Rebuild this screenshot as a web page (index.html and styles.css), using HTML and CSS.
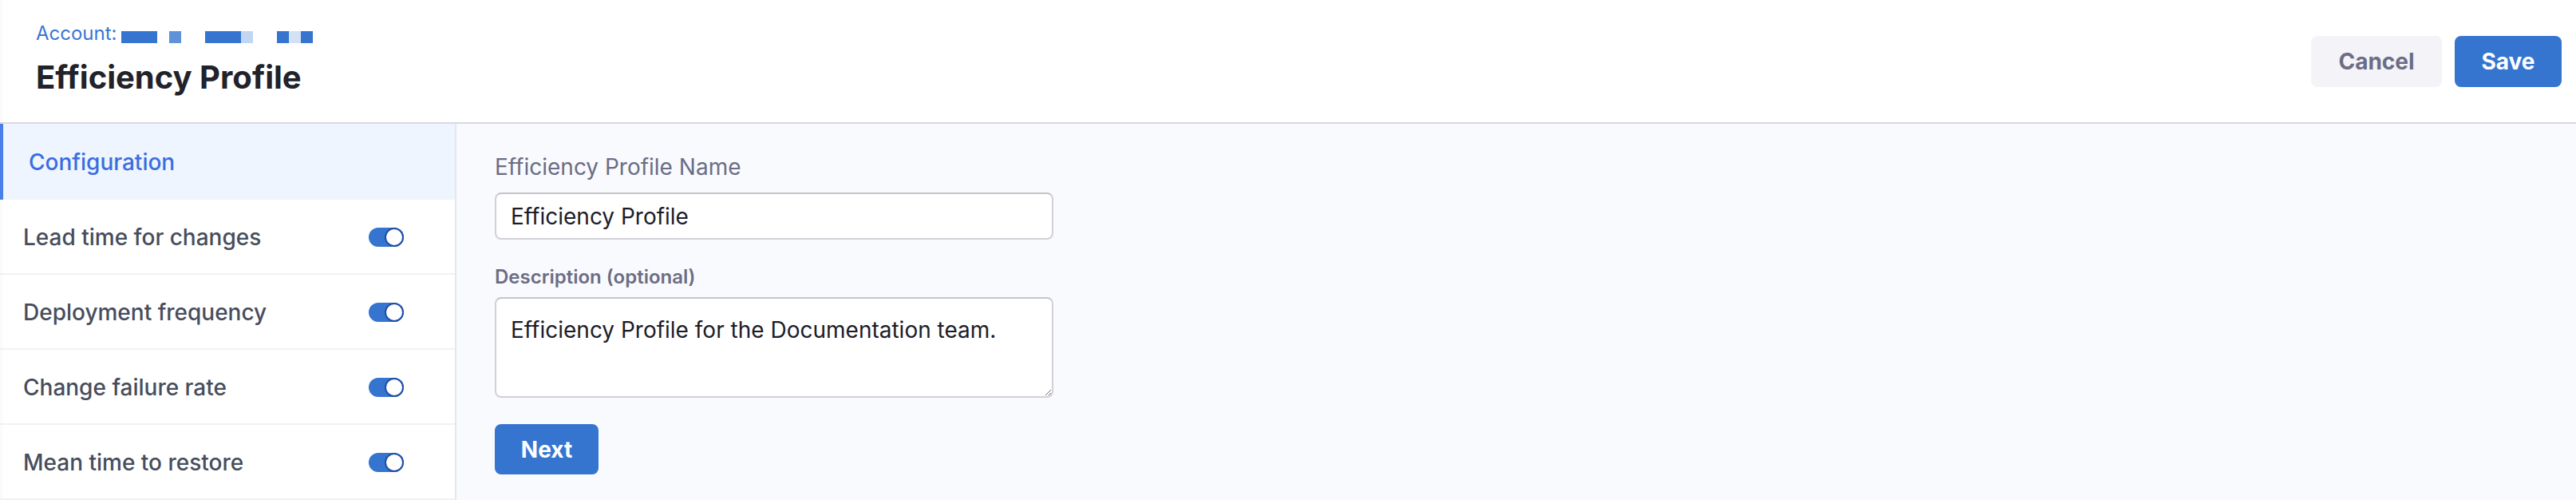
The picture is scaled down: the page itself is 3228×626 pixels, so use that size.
FILE: index.html
```html
<!DOCTYPE html>
<html lang="en">
<head>
    <meta charset="UTF-8">
    <meta name="viewport" content="width=device-width, initial-scale=1.0">
    <title>Efficiency Profile</title>
    <link rel="stylesheet" href="styles.css">
</head>
<body>
    <header class="page-header">
        <div class="header-titles">
            <div class="account">
                <span class="account-label">Account:</span>
                <!-- redacted account name -->
                <span class="redact">
                    <i class="px dark w3"></i><i class="px gap"></i><i class="px mid"></i><i class="px gap w2"></i>
                    <i class="px dark w3"></i><i class="px light"></i><i class="px gap w2"></i>
                    <i class="px dark"></i><i class="px pale"></i><i class="px dark"></i>
                </span>
            </div>
            <h1 class="title">Efficiency Profile</h1>
        </div>
        <div class="header-actions">
            <button class="btn btn-secondary">Cancel</button>
            <button class="btn btn-primary">Save</button>
        </div>
    </header>

    <div class="layout">
        <nav class="sidebar">
            <div class="nav-item active">Configuration</div>
            <div class="nav-item">
                <span>Lead time for changes</span>
                <span class="toggle on"></span>
            </div>
            <div class="nav-item">
                <span>Deployment frequency</span>
                <span class="toggle on"></span>
            </div>
            <div class="nav-item">
                <span>Change failure rate</span>
                <span class="toggle on"></span>
            </div>
            <div class="nav-item">
                <span>Mean time to restore</span>
                <span class="toggle on"></span>
            </div>
        </nav>

        <main class="content">
            <form class="profile-form">
                <label class="field-label" for="profile-name">Efficiency Profile Name</label>
                <input type="text" id="profile-name" class="text-input" value="Efficiency Profile">

                <label class="field-label small" for="description">Description (optional)</label>
                <textarea id="description" class="text-area">Efficiency Profile for the Documentation team.</textarea>

                <button type="button" class="btn btn-primary btn-next">Next</button>
            </form>
        </main>
    </div>
</body>
</html>
```

FILE: styles.css
```css
body {
    margin: 0;
    font-family: 'Inter', 'Noto Sans', sans-serif;
    background-color: #f9fafe;
    height: 626px;
    overflow: hidden;
}

/* header */
.page-header {
    height: 153px;
    background-color: #fff;
    border-bottom: 2px solid #d9d8e0;
    display: flex;
    justify-content: space-between;
    align-items: center;
    padding: 0 18px 0 45px;
    box-shadow: inset 6px 0 6px -6px rgba(0,0,0,0.06);
}

.header-titles {
    display: flex;
    flex-direction: column;
    align-self: flex-start;
    padding-top: 24px;
}

.account {
    display: flex;
    align-items: center;
    height: 34px;
}

.account-label {
    font-size: 24px;
    color: #3a76d4;
}

.redact {
    display: flex;
    margin-left: 5px;
    margin-top: 10px;
}

.px {
    display: block;
    width: 15px;
    height: 15px;
}

.px.w2 { width: 30px; }
.px.w3 { width: 45px; }
.px.dark { background-color: #3575d0; }
.px.mid { background-color: #5f93d9; }
.px.light { background-color: #c2d6f1; }
.px.pale { background-color: #d3e1f4; }

.title {
    margin: 15px 0 0 0;
    font-size: 40px;
    font-weight: 700;
    color: #22222a;
    line-height: 48px;
}

.header-actions {
    display: flex;
    gap: 16px;
}

.btn {
    font-family: inherit;
    font-size: 28px;
    font-weight: 700;
    border: none;
    border-radius: 8px;
    height: 64px;
    cursor: pointer;
}

.btn-secondary {
    width: 164px;
    background-color: #f3f3f8;
    color: #6b6d85;
}

.btn-primary {
    width: 134px;
    background-color: #3575d0;
    color: #fff;
}

/* body layout */
.layout {
    display: flex;
    height: 471px;
}

.sidebar {
    width: 570px;
    background-color: #fff;
    border-right: 2px solid #e6e6ec;
    box-shadow: inset 6px 0 6px -6px rgba(0,0,0,0.06);
}

.nav-item {
    height: 90px;
    border-bottom: 2px solid #f1f1f4;
    display: flex;
    justify-content: space-between;
    align-items: center;
    padding: 2px 64px 0 29px;
    font-size: 28px;
    font-weight: 500;
    color: #474d5c;
}

.nav-item.active {
    height: 95px;
    border-bottom: none;
    border-left: 4px solid #4a7ee8;
    padding: 0 0 0 32px;
    background-color: #eef5fe;
    color: #3a6de0;
}

.toggle {
    position: relative;
    width: 44px;
    height: 24px;
    border-radius: 12px;
    background-color: #3575d0;
}

.toggle.on::after {
    content: "";
    position: absolute;
    right: 0;
    top: 0;
    width: 20px;
    height: 20px;
    border-radius: 50%;
    background-color: #fff;
    border: 2px solid #1f4ea6;
}

/* form */
.content {
    flex: 1;
    padding: 37px 0 0 48px;
}

.profile-form {
    display: flex;
    flex-direction: column;
    width: 700px;
}

.field-label {
    font-size: 28px;
    color: #6b6d85;
    line-height: 34px;
}

.field-label.small {
    font-size: 24px;
    font-weight: 600;
    line-height: 29px;
    margin-top: 32px;
}

.text-input, .text-area {
    font-family: inherit;
    font-size: 28px;
    color: #1c1c28;
    background-color: #fff;
    border: 2px solid #d0d0d6;
    border-top-color: #c4c4ca;
    border-radius: 8px;
    box-sizing: border-box;
    width: 700px;
    outline: none;
}

.text-input {
    height: 59px;
    margin-top: 15px;
    padding: 0 18px;
}

.text-area {
    height: 126px;
    margin-top: 11px;
    padding: 22px 18px;
    line-height: 34px;
    resize: vertical;
}

.btn-next {
    width: 130px;
    height: 63px;
    margin-top: 33px;
}
```
